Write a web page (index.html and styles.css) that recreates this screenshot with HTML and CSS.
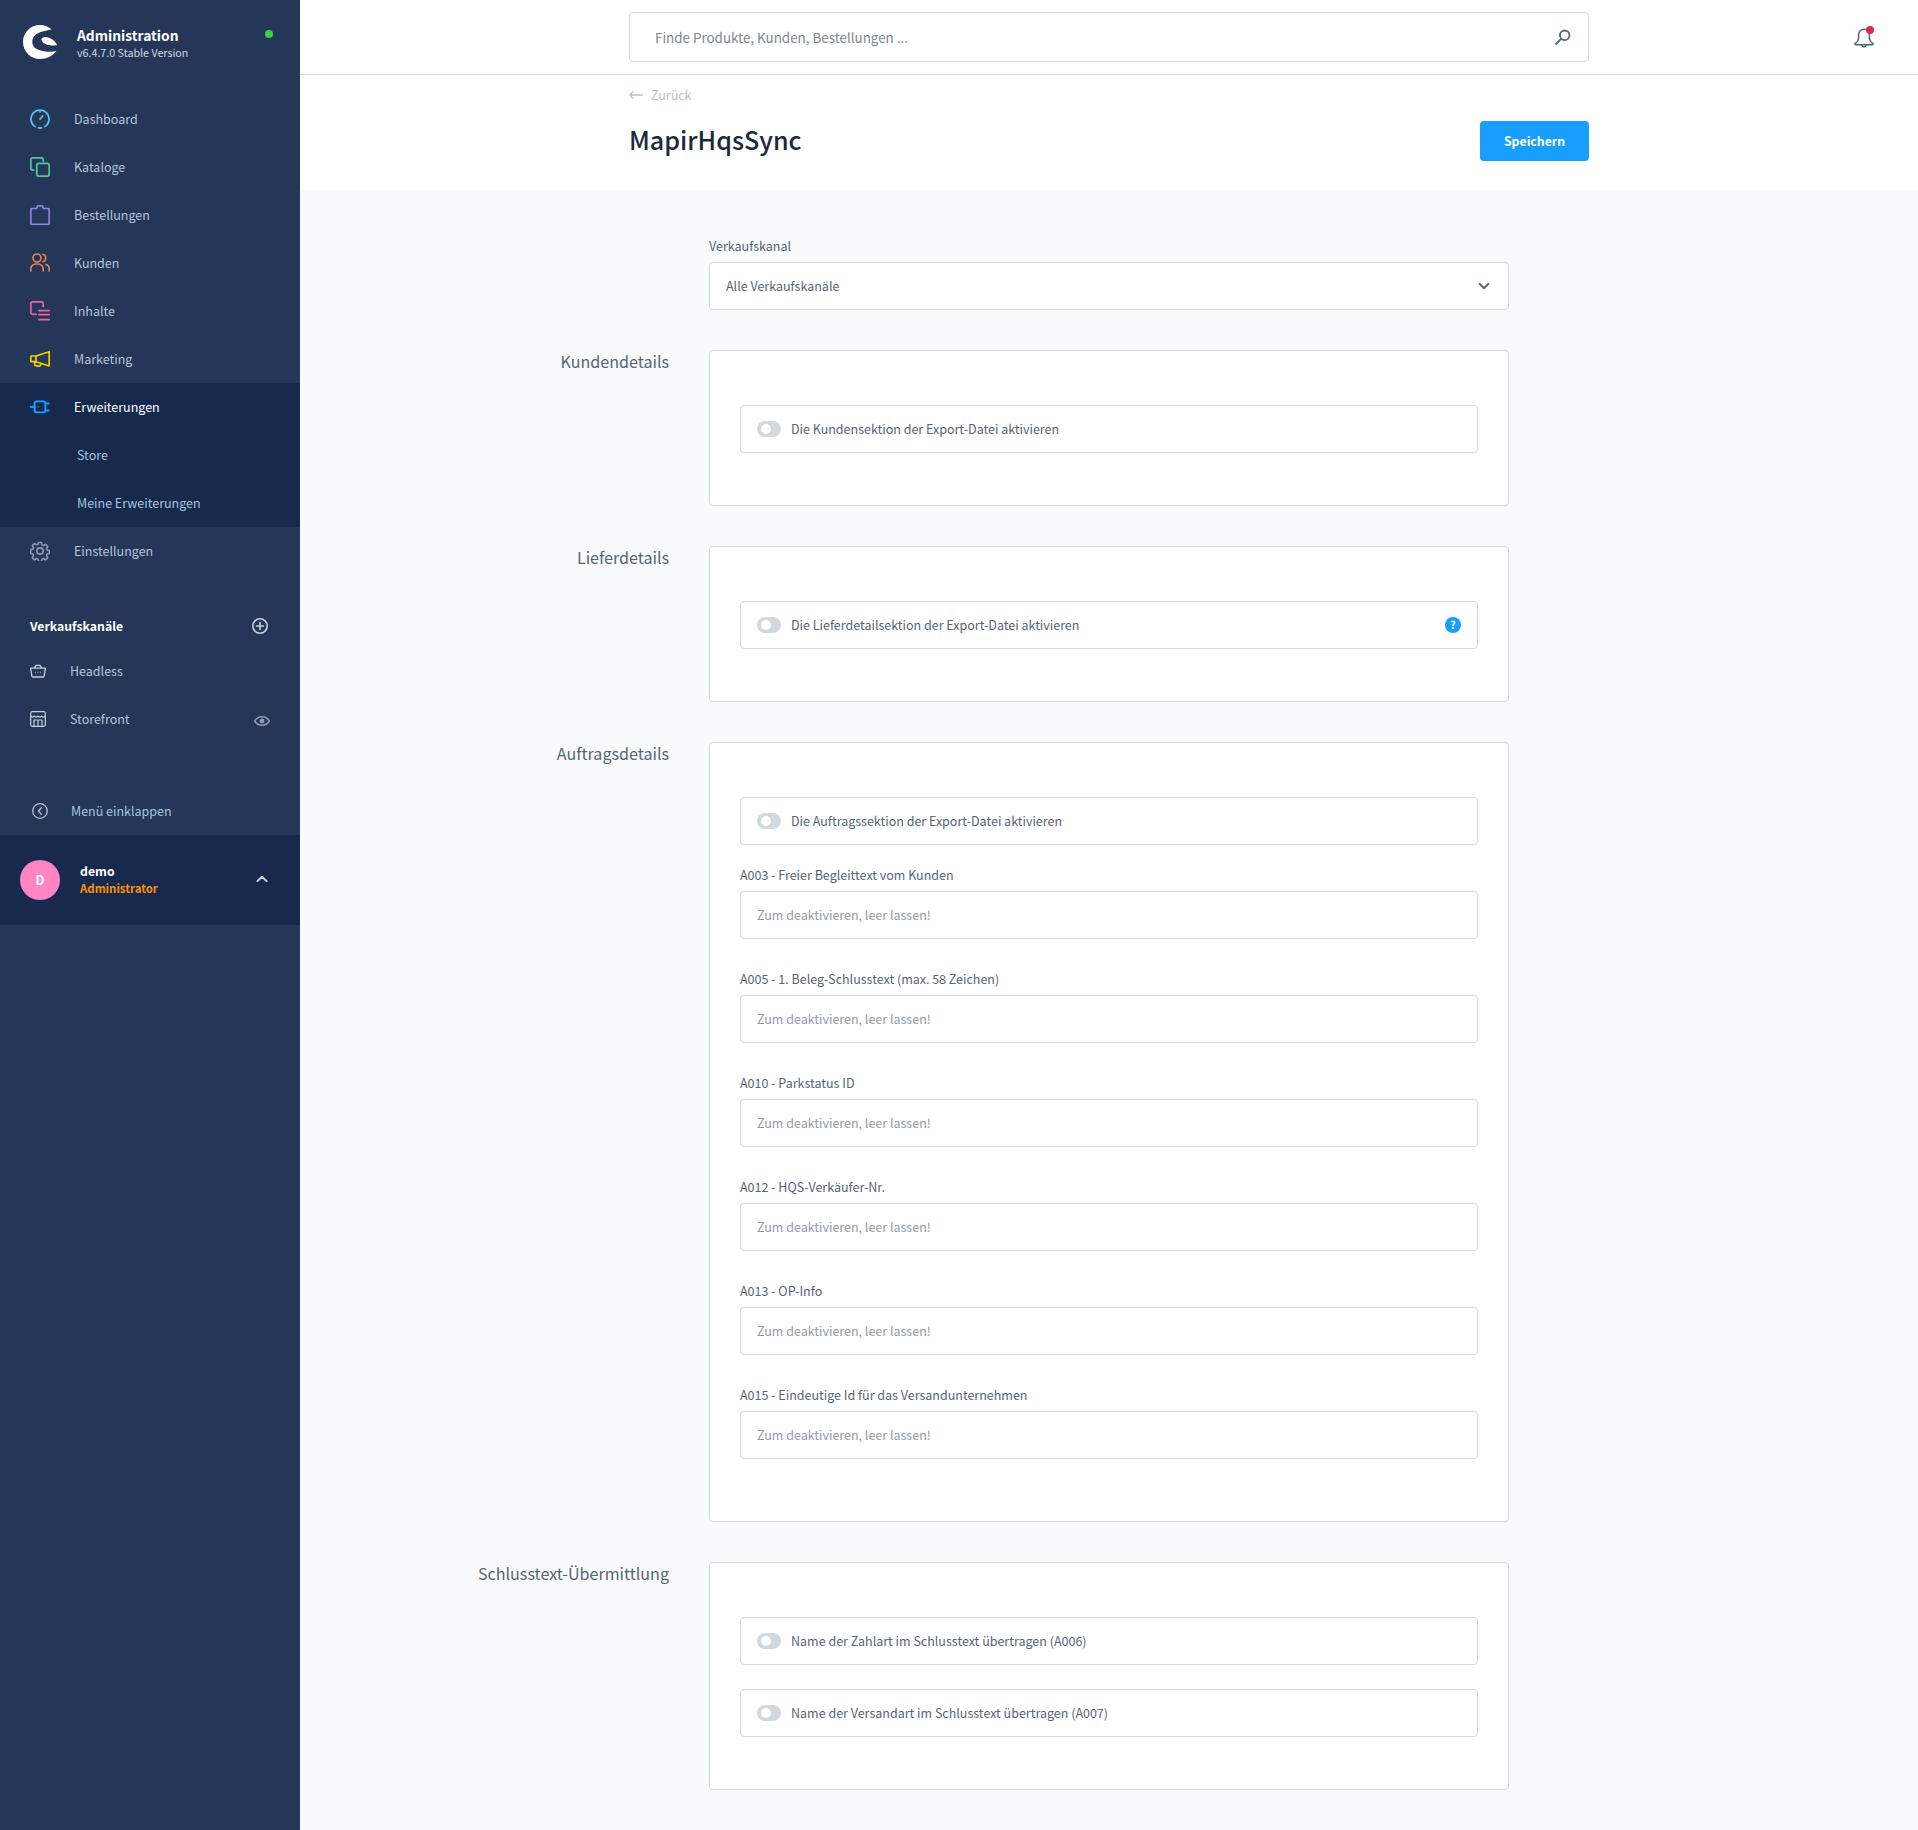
FILE: index.html
```html
<!DOCTYPE html>
<html lang="de">
<head>
<meta charset="utf-8">
<title>MapirHqsSync</title>
<link rel="stylesheet" href="styles.css">
</head>
<body>
<aside class="sidebar">
  <div class="brand">
    <svg class="logo" viewBox="0 0 34 34"><path fill="#fff" d="M28.500 4.300C25 1.500 21.500 0 17 0 7.500 0 0 7.500 0 17s7.500 17 17 17c6.500 0 12.500-3 16.500-8-3.500 1-7.500 1-12.500.2C14 25 9.300 22.500 9.300 16.700 9.300 10.500 15 7.200 20.500 6.200 23.500 5.600 26.500 5 28.500 4.300Z"/><path fill="#fff" d="M18.500 14.500c0-2.500 3.700-3.300 7.500-1.800 3.800 1.600 7 3.800 8 7.300-1 .4-4 .6-7 .2-4.500-.6-8.500-2.600-8.500-5.700Z"/></svg>
    <div class="brand-text">
      <div class="brand-title">Administration</div>
      <div class="brand-version">v6.4.7.0 Stable Version</div>
    </div>
    <span class="status-dot"></span>
  </div>
  <nav class="nav">
    <a class="nav-row"><svg class="nav-icon" viewBox="0 0 20 20" fill="none" stroke="#57c7e8" stroke-width="1.700" stroke-linecap="round"><path d="M5.200 17.600A9 9 0 1 1 14.800 17.600M10 1.500v1.500M8.500 18.900h3M10 10.200l2.700-3.200"/></svg><span>Dashboard</span></a>
    <a class="nav-row"><svg class="nav-icon" viewBox="0 0 20 20" fill="none" stroke="#4fc99a" stroke-width="1.700"><path d="M4.500 13.200H2.800A2 2 0 0 1 .8 11.200V2.800a2 2 0 0 1 2-2h8.400a2 2 0 0 1 2 2v2"/><rect x="6.800" y="6.400" width="12.400" height="12.800" rx="2"/></svg><span>Kataloge</span></a>
    <a class="nav-row"><svg class="nav-icon" viewBox="0 0 20 20" fill="none" stroke="#9283e8" stroke-width="1.700" stroke-linejoin="round"><path d="M7 3.500H2A1.200 1.200 0 0 0 .8 4.700v13.500A1.200 1.200 0 0 0 2 19.400h16a1.200 1.200 0 0 0 1.200-1.200V4.700A1.200 1.200 0 0 0 18 3.500h-5M7 3.500V2.400A1.500 1.500 0 0 1 8.500.8h3A1.500 1.500 0 0 1 13 2.400v1.100"/></svg><span>Bestellungen</span></a>
    <a class="nav-row"><svg class="nav-icon" viewBox="0 0 20 20" fill="none" stroke="#f0805a" stroke-width="1.600" stroke-linecap="round"><circle cx="7" cy="5" r="4"/><path d="M.8 18v-2a5 5 0 0 1 5-5h2.400a5 5 0 0 1 5 5v2M13 1.200a4 4 0 0 1 0 7.600M16 11.400a4.500 4.500 0 0 1 3.200 4.300V18"/></svg><span>Kunden</span></a>
    <a class="nav-row"><svg class="nav-icon" viewBox="0 0 20 20" fill="none" stroke="#f05fa8" stroke-width="1.700" stroke-linecap="round"><path d="M6 13.400H2.800a2 2 0 0 1-2-2V2.800a2 2 0 0 1 2-2h8.400a2 2 0 0 1 2 2v2.600M9 9.700h10.200M9 13.700h10.200M9 18.700h10.200"/></svg><span>Inhalte</span></a>
    <a class="nav-row"><svg class="nav-icon" viewBox="0 0 20 20" fill="none" stroke="#f5cf00" stroke-width="1.700" stroke-linejoin="round"><path d="M19.200 2.700V17L6 12.700V7ZM6 7H1.500a.8.800 0 0 0-.7.800v4.100a.8.800 0 0 0 .7.800H6M5 12.700l-.3 2a2 2 0 0 0 1.700 2.200l2 .3a2 2 0 0 0 2.200-1.500l.2-.7"/></svg><span>Marketing</span></a>
    <div class="nav-group">
      <a class="nav-row nav-row-active"><svg class="nav-icon" viewBox="0 0 20 20" fill="none" stroke="#189eff" stroke-width="1.900" stroke-linecap="round"><rect x="4.600" y="4.400" width="10.800" height="11" rx="2"/><path d="M.6 10H4.500M15.500 6.500h3.200M15.500 13.500h3.200"/><path d="M7.800 9.800h.4" stroke-width="1.200"/></svg><span>Erweiterungen</span></a>
      <a class="nav-row nav-sub">Store</a>
      <a class="nav-row nav-sub">Meine Erweiterungen</a>
    </div>
    <a class="nav-row"><svg class="nav-icon" viewBox="0 0 20 20" fill="none" stroke="#8b9cb0" stroke-width="1.700" stroke-linejoin="round"><circle cx="10" cy="10" r="3.200"/><path d="M8.300.8h3.400l.5 2.700 1.600.7 2.300-1.500 2.400 2.400-1.500 2.300.7 1.600 2.500.5v3.400l-2.500.5-.7 1.600 1.500 2.300-2.400 2.400-2.300-1.500-1.600.7-.5 2.500H8.300l-.5-2.500-1.600-.7-2.300 1.500-2.400-2.400 1.500-2.300-.7-1.600-2.500-.5V8.500l2.500-.5.7-1.600-1.500-2.300 2.400-2.400 2.300 1.500 1.600-.7Z" transform="translate(.85 .85) scale(.915)"/></svg><span>Einstellungen</span></a>
  </nav>
  <div class="channels-head">
    <span>Verkaufskanäle</span>
    <svg class="channels-add" viewBox="0 0 16 16" fill="none" stroke="#c4d0dd" stroke-width="1.600" stroke-linecap="round"><circle cx="8" cy="8" r="7.200"/><path d="M8 4.500v7M4.500 8h7"/></svg>
  </div>
  <a class="channel-row"><svg class="channel-icon" viewBox="0 0 16 16" fill="none" stroke="#c4d0dd" stroke-width="1.300" stroke-linejoin="round"><path d="M.6 5.200h14.800l-1.300 8a1 1 0 0 1-1 .8H2.900a1 1 0 0 1-1-.8ZM4.200 5.200 6 2.300h4l1.800 2.900"/><path d="M5 9.500h.6M7.700 9.500h.6M10.400 9.500h.6"/></svg><span>Headless</span></a>
  <a class="channel-row"><svg class="channel-icon" viewBox="0 0 16 16" fill="none" stroke="#c4d0dd" stroke-width="1.200" stroke-linejoin="round"><rect x=".7" y=".7" width="14.600" height="14.600" rx="1.500"/><path d="M.7 5c1.500 1.400 3 1.400 3.700 0 .8 1.400 2.800 1.400 3.600 0 .8 1.400 2.800 1.400 3.600 0 .8 1.400 2.200 1.400 3.700 0M4 15V9h8v6M8 9v6"/></svg><span>Storefront</span><svg class="channel-eye" viewBox="0 0 16 10" fill="none" stroke="#8b9cb0" stroke-width="1.500"><path d="M.7 5C2.500 2 5 .8 8 .8S13.500 2 15.300 5C13.500 8 11 9.200 8 9.200S2.500 8 .7 5Z"/><circle cx="8" cy="5" r="1.700" fill="#8b9cb0"/></svg></a>
  <a class="collapse-row"><svg class="collapse-icon" viewBox="0 0 16 16" fill="none" stroke="#b3c2d2" stroke-width="1.300" stroke-linecap="round" stroke-linejoin="round"><circle cx="8" cy="8" r="7.300"/><path d="M9.300 4.800 6.500 8l2.800 3.200"/></svg><span>Menü einklappen</span></a>
  <div class="user">
    <span class="avatar">D</span>
    <div class="user-text">
      <div class="user-name">demo</div>
      <div class="user-role">Administrator</div>
    </div>
    <svg class="user-chevron" viewBox="0 0 12 8" fill="none" stroke="#c4d0dd" stroke-width="2" stroke-linecap="round" stroke-linejoin="round"><path d="M1.500 6 6 1.800 10.500 6"/></svg>
  </div>
</aside>
<div class="main">
  <header class="topbar">
    <div class="search">
      <input class="search-input" type="text" placeholder="Finde Produkte, Kunden, Bestellungen ...">
      <svg class="search-icon" viewBox="0 0 16 16" fill="none" stroke="#52667a" stroke-width="1.800" stroke-linecap="round"><circle cx="9.700" cy="6.300" r="4.800"/><path d="M6.300 9.700 1 15"/></svg>
    </div>
    <div class="bell">
      <svg class="bell-icon" viewBox="0 0 20 20" fill="none" stroke="#52667a" stroke-width="1.500" stroke-linejoin="round"><path d="M10 1.200c-3.200 0-5.400 2.400-5.400 5.400v3.700c0 2.300-1.500 3.800-3.200 5.100-.8.600-.5 1.400.4 1.400h16.400c.9 0 1.200-.8.400-1.400-1.700-1.300-3.200-2.800-3.200-5.100V6.600c0-3-2.200-5.400-5.400-5.400Z"/><path d="M8 17c.2 1.300 1 2 2 2s1.800-.7 2-2"/></svg>
      <span class="bell-dot"></span>
    </div>
  </header>
  <section class="page-head">
    <div class="page-head-inner">
      <a class="back"><svg class="back-arrow" viewBox="0 0 14 8" fill="none" stroke="#b9c4d0" stroke-width="1.300" stroke-linecap="round" stroke-linejoin="round"><path d="M13.400 4H.8M4 .8.800 4 4 7.200"/></svg><span>Zurück</span></a>
      <div class="title-row">
        <h1 class="title">MapirHqsSync</h1>
        <button class="save" type="button">Speichern</button>
      </div>
    </div>
  </section>
  <main class="content">
    <div class="channel-field">
      <div class="field-label">Verkaufskanal</div>
      <div class="select"><span>Alle Verkaufskanäle</span><svg class="select-chevron" viewBox="0 0 12 8" fill="none" stroke="#52667a" stroke-width="2" stroke-linecap="round" stroke-linejoin="round"><path d="M1.500 1.800 6 6.200l4.500-4.400"/></svg></div>
    </div>

    <section class="group">
      <h2 class="group-title">Kundendetails</h2>
      <div class="card">
        <div class="bool"><span class="toggle"></span><span>Die Kundensektion der Export-Datei aktivieren</span></div>
      </div>
    </section>

    <section class="group">
      <h2 class="group-title">Lieferdetails</h2>
      <div class="card">
        <div class="bool"><span class="toggle"></span><span>Die Lieferdetailsektion der Export-Datei aktivieren</span><span class="help">?</span></div>
      </div>
    </section>

    <section class="group">
      <h2 class="group-title">Auftragsdetails</h2>
      <div class="card">
        <div class="bool"><span class="toggle"></span><span>Die Auftragssektion der Export-Datei aktivieren</span></div>
        <div class="field"><div class="field-label">A003 - Freier Begleittext vom Kunden</div><input class="input" type="text" placeholder="Zum deaktivieren, leer lassen!"></div>
        <div class="field"><div class="field-label">A005 - 1. Beleg-Schlusstext (max. 58 Zeichen)</div><input class="input" type="text" placeholder="Zum deaktivieren, leer lassen!"></div>
        <div class="field"><div class="field-label">A010 - Parkstatus ID</div><input class="input" type="text" placeholder="Zum deaktivieren, leer lassen!"></div>
        <div class="field"><div class="field-label">A012 - HQS-Verkäufer-Nr.</div><input class="input" type="text" placeholder="Zum deaktivieren, leer lassen!"></div>
        <div class="field"><div class="field-label">A013 - OP-Info</div><input class="input" type="text" placeholder="Zum deaktivieren, leer lassen!"></div>
        <div class="field"><div class="field-label">A015 - Eindeutige Id für das Versandunternehmen</div><input class="input" type="text" placeholder="Zum deaktivieren, leer lassen!"></div>
      </div>
    </section>

    <section class="group">
      <h2 class="group-title">Schlusstext-Übermittlung</h2>
      <div class="card">
        <div class="bool"><span class="toggle"></span><span>Name der Zahlart im Schlusstext übertragen (A006)</span></div>
        <div class="bool"><span class="toggle"></span><span>Name der Versandart im Schlusstext übertragen (A007)</span></div>
      </div>
    </section>
  </main>
</div>
</body>
</html>
```

FILE: styles.css
```css
* { box-sizing: border-box; }

html, body { margin: 0; padding: 0; }

body {
  display: flex;
  width: 1918px;
  min-height: 1830px;
  background: #f9fafb;
  color: #52667a;
  font-family: "Noto Sans CJK SC", "Noto Sans", sans-serif;
  font-size: 12.5px;
  line-height: 20px;
}

/* Sidebar */
.sidebar {
  flex: 0 0 300px;
  background: #243758;
  color: #b3c6d9;
}

.brand {
  display: flex;
  align-items: flex-start;
  height: 95px;
  padding: 25px 27px 0 23px;
}

.logo { width: 34px; height: 34px; flex: none; }

.brand-text { margin-left: 20px; flex: 1; }

.brand-title {
  color: #fff;
  font-size: 13.8px;
  font-weight: 700;
  line-height: 20px;
}

.brand-version {
  margin-top: 1px;
  color: #cdd9e5;
  font-size: 10.7px;
  line-height: 14px;
}

.status-dot {
  width: 8px;
  height: 8px;
  margin-top: 5px;
  border-radius: 50%;
  background: #37d046;
}

.nav-row {
  display: flex;
  align-items: center;
  height: 48px;
  padding-left: 30px;
}

.nav-icon { width: 20px; height: 20px; flex: none; margin-right: 24px; }

.nav-group { background: #172a4e; }

.nav-row-active { color: #fff; }

.nav-sub { padding-left: 77px; color: #a4c4df; }

.channels-head {
  display: flex;
  align-items: center;
  justify-content: space-between;
  height: 42px;
  margin-top: 30px;
  padding: 0 32px 0 30px;
  color: #fff;
  font-size: 12.25px;
  font-weight: 700;
}

.channels-add { width: 16px; height: 16px; }

.channel-row {
  display: flex;
  align-items: center;
  height: 48px;
  padding: 0 30px;
}

.channel-icon { width: 16px; height: 16px; flex: none; margin-right: 24px; }

.channel-eye { width: 16px; height: 10px; margin-left: auto; margin-top: 3px; }

.collapse-row {
  display: flex;
  align-items: center;
  height: 48px;
  margin-top: 44px;
  padding-left: 32px;
  color: #a4c4df;
}

.collapse-icon { width: 16px; height: 16px; flex: none; margin-right: 23px; }

.user {
  display: flex;
  align-items: center;
  height: 90px;
  padding: 0 32px 0 20px;
  background: #172a4e;
}

.avatar {
  display: flex;
  align-items: center;
  justify-content: center;
  width: 40px;
  height: 40px;
  flex: none;
  border-radius: 50%;
  background: #ff85c2;
  color: #fff;
  font-weight: 700;
}

.user-text { flex: 1; margin-left: 20px; margin-top: -2px; }

.user-name { color: #fff; font-size: 12.3px; font-weight: 700; line-height: 17px; }

.user-role { color: #ff9100; font-size: 11.4px; font-weight: 700; line-height: 16px; }

.user-chevron { width: 12px; height: 8px; margin-top: -3px; }

/* Main */
.main { flex: 1; min-width: 0; }

.topbar {
  position: relative;
  display: flex;
  justify-content: center;
  height: 75px;
  padding-top: 12px;
  background: #fff;
  border-bottom: 1px solid #d1d9e0;
}

.search {
  position: relative;
  width: 960px;
  height: 50px;
}

.search-input {
  width: 100%;
  height: 100%;
  padding: 0 60px 0 25px;
  background: #fff;
  border: 1px solid #d1d9e0;
  border-radius: 4px;
  color: #52667a;
  font: 13.4px "Noto Sans CJK SC", "Noto Sans", sans-serif;
}

.search-input::placeholder { color: #7c8793; opacity: 1; }

.search-icon {
  position: absolute;
  right: 18px;
  top: 17px;
  width: 16px;
  height: 16px;
}

.bell {
  position: absolute;
  left: 1554px;
  top: 28px;
  width: 20px;
  height: 20px;
}

.bell-icon { display: block; width: 20px; height: 20px; }

.bell-dot {
  position: absolute;
  left: 12px;
  top: -2px;
  width: 8px;
  height: 8px;
  border-radius: 50%;
  background: #de294c;
}

.page-head {
  height: 115px;
  background: #fff;
}

.page-head-inner { width: 960px; margin: 0 auto; }

.back {
  display: flex;
  align-items: center;
  height: 20px;
  padding-top: 10px;
  box-sizing: content-box;
  color: #b3bfcc;
}

.back-arrow { width: 14px; height: 8px; margin-right: 8px; }

.title-row {
  display: flex;
  align-items: center;
  justify-content: space-between;
  height: 40px;
  margin-top: 16px;
}

.title {
  margin: 0 0 5px;
  color: #1a2a3a;
  font-size: 25.1px;
  font-weight: 500;
  line-height: 36px;
}

.save {
  width: 109px;
  height: 40px;
  padding: 0;
  background: #189eff;
  border: 0;
  border-radius: 4px;
  color: #fff;
  font: 700 12.3px "Noto Sans CJK SC", "Noto Sans", sans-serif;
}

.content { padding: 50px 0 40px; }

.channel-field { width: 800px; margin: 0 auto 40px; }

.field-label { height: 12px; margin-bottom: 10px; line-height: 12px; }

.select {
  display: flex;
  align-items: center;
  justify-content: space-between;
  height: 48px;
  padding: 0 18px 0 16px;
  background: #fff;
  border: 1px solid #d1d9e0;
  border-radius: 4px;
}

.select-chevron { width: 12px; height: 8px; }

.group {
  display: grid;
  grid-template-columns: 409px 800px;
  margin-bottom: 40px;
}

.group:last-child { margin-bottom: 0; }

.group-title {
  margin: 0;
  padding-right: 40px;
  color: #52667a;
  font-size: 16.1px;
  font-weight: 400;
  line-height: 22px;
  text-align: right;
}

.card {
  padding: 54px 30px 28px;
  background: #fff;
  border: 1px solid #d1d9e0;
  border-radius: 4px;
}

.bool {
  display: flex;
  align-items: center;
  height: 48px;
  margin-bottom: 24px;
  padding: 0 16px;
  background: #fff;
  border: 1px solid #d1d9e0;
  border-radius: 4px;
}

.toggle {
  position: relative;
  width: 24px;
  height: 16px;
  flex: none;
  margin-right: 10px;
  border-radius: 8px;
  background: #d1d9e0;
}

.toggle::after {
  content: "";
  position: absolute;
  left: 4px;
  top: 3px;
  width: 10px;
  height: 10px;
  border-radius: 50%;
  background: #fff;
}

.help {
  display: flex;
  align-items: center;
  justify-content: center;
  width: 16px;
  height: 16px;
  margin-left: auto;
  border-radius: 50%;
  background: #189eff;
  color: #fff;
  font-size: 10.5px;
  font-weight: 700;
  line-height: 16px;
}

.field { height: 70px; margin-bottom: 34px; }

.input {
  display: block;
  width: 100%;
  height: 48px;
  padding: 0 16px 2px;
  background: #fff;
  border: 1px solid #d1d9e0;
  border-radius: 4px;
  color: #52667a;
  font: 12.5px "Noto Sans CJK SC", "Noto Sans", sans-serif;
}

.input::placeholder { color: #8c9cad; opacity: 1; }
```
